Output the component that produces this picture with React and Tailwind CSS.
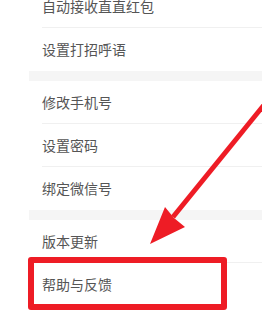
import React from 'react';

const groups = [
  ['自动接收直直红包', '设置打招呼语'],
  ['修改手机号', '设置密码', '绑定微信号'],
  ['版本更新', '帮助与反馈'],
];

export default function App() {
  return (
    <div className="relative w-[262px] h-[311px] overflow-hidden bg-white font-['Noto_Sans_CJK_SC',sans-serif]">
      <div className="ml-[29px] -mt-[15px]">
        {groups.map((rows, gi) => (
          <div key={gi}>
            {gi > 0 && <div className="h-[10px] bg-[#f5f5f5]" />}
            {rows.map((label, ri) => (
              <div
                key={label}
                className={
                  'ml-[13px] h-[43px] flex items-center text-[14px] text-[#555] ' +
                  (ri < rows.length - 1 ? 'border-b border-[#f0f0f0]' : '')
                }
              >
                {label}
              </div>
            ))}
          </div>
        ))}
      </div>

      {/* annotation box */}
      <div className="absolute left-[28px] top-[257px] w-[199px] h-[53px] border-[6px] border-[#ee1c25] rounded-[3px]" />

      {/* annotation arrow */}
      <svg className="absolute inset-0" width="262" height="311" viewBox="0 0 262 311">
        <line x1="268" y1="100" x2="173" y2="217" stroke="#ee1c25" strokeWidth="5" />
        <polygon points="150,244 165,207 174,218 185,227" fill="#ee1c25" />
      </svg>
    </div>
  );
}
